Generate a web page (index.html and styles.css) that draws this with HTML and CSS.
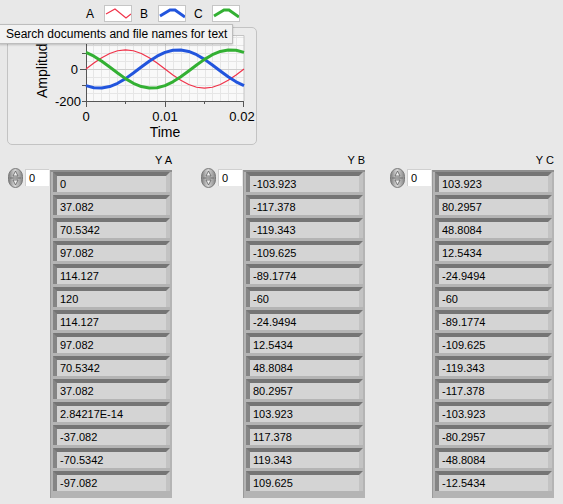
FILE: index.html
```html
<!DOCTYPE html>
<html lang="en">
<head>
    <meta charset="UTF-8">
    <title>Three Phase Arrays</title>
    <link rel="stylesheet" href="styles.css">
</head>
<body>
<div class="panel">
    <div class="legend">
        <span class="legend-label">A</span>
        <span class="legend-swatch">
            <svg width="26" height="15" viewBox="0 0 26 15"><polyline points="1,8 10,3 21,12 26,8" fill="none" stroke="#f0334a" stroke-width="1.2"/></svg>
        </span>
        <span class="legend-label">B</span>
        <span class="legend-swatch">
            <svg width="26" height="15" viewBox="0 0 26 15"><polyline points="1,10 11,4 16,4 26,11" fill="none" stroke="#2255dd" stroke-width="3"/></svg>
        </span>
        <span class="legend-label">C</span>
        <span class="legend-swatch">
            <svg width="26" height="15" viewBox="0 0 26 15"><polyline points="1,10 11,4 16,4 26,11" fill="none" stroke="#33b033" stroke-width="3"/></svg>
        </span>
    </div>

    <div class="graph">
        <svg class="chart" width="248" height="116" viewBox="8 28 248 116">
            <rect x="86" y="35" width="158" height="66" fill="#f9f9f9"/>
            <!-- minor grid -->
            <path d="M93.5 35V101M101.5 35V101M109.5 35V101M117.5 35V101M125.5 35V101M133.5 35V101M141.5 35V101M149.5 35V101M157.5 35V101M173.5 35V101M181.5 35V101M189.5 35V101M197.5 35V101M205.5 35V101M212.5 35V101M220.5 35V101M228.5 35V101M236.5 35V101
                     M86 37.5H244M86 45.5H244M86 53.5H244M86 61.5H244M86 77.5H244M86 85.5H244M86 93.5H244"
                  stroke="#e6e6e6" stroke-width="1"/>
            <!-- major grid -->
            <path d="M165.5 35V101M86 69.5H244" stroke="#cfcfcf" stroke-width="1"/>
            <path d="M86 35.5H244V101" fill="none" stroke="#c4c4c4" stroke-width="1"/>
            <!-- axes -->
            <path d="M86.5 35V101.5H244" fill="none" stroke="#555" stroke-width="1"/>
            <path d="M80 69.5H86M82 101.5H86M82 85.5H86M82 53.5H86M82 37.5H86M86.5 101V107M165.5 101V107M243.5 101V107M125.5 101V104M204.5 101V104"
                  stroke="#555" stroke-width="1"/>

            <polyline fill="none" stroke="#f0334a" stroke-width="1.2" stroke-linejoin="round"
                points="86,69 93.9,63.07 101.8,57.71 109.7,53.47 117.6,50.74 125.5,49.8 133.4,50.74 141.3,53.47 149.2,57.71 157.1,63.07 165,69 172.9,74.93 180.8,80.29 188.7,84.53 196.6,87.26 204.5,88.2 212.4,87.26 220.3,84.53 228.2,80.29 236.1,74.93 244,69"/>
            <polyline fill="none" stroke="#2255dd" stroke-width="3" stroke-linejoin="round"
                points="86,85.63 93.9,87.78 101.8,88.09 109.7,86.54 117.6,83.27 125.5,78.6 133.4,72.99 141.3,66.99 149.2,61.19 157.1,56.15 165,52.37 172.9,50.22 180.8,49.91 188.7,51.46 196.6,54.73 204.5,59.4 212.4,65.01 220.3,71.01 228.2,76.81 236.1,81.85 244,85.63"/>
            <polyline fill="none" stroke="#33b033" stroke-width="3" stroke-linejoin="round"
                points="86,52.37 93.9,56.15 101.8,61.19 109.7,66.99 117.6,72.99 125.5,78.6 133.4,83.27 141.3,86.54 149.2,88.09 157.1,87.78 165,85.63 172.9,81.85 180.8,76.81 188.7,71.01 196.6,65.01 204.5,59.4 212.4,54.73 220.3,51.46 228.2,49.91 236.1,50.22 244,52.37"/>

            <text class="tick" x="78" y="74" text-anchor="end">0</text>
            <text class="tick" x="81" y="106" text-anchor="end">-200</text>
            <text class="tick" x="86" y="121" text-anchor="middle">0</text>
            <text class="tick" x="165" y="121" text-anchor="middle">0.01</text>
            <text class="tick" x="242" y="121" text-anchor="middle">0.02</text>
            <text class="axis-name" x="165" y="137" text-anchor="middle">Time</text>
            <text class="axis-name" transform="translate(47,98) rotate(-90)">Amplitude</text>
        </svg>
    </div>

    <div class="arrays">
        <div class="array-group">
            <div class="array-label">Y A</div>
            <div class="array-body">
                <div class="index">
                    <svg class="spinner" width="15" height="20" viewBox="0 0 15 20">
                        <defs>
                            <linearGradient id="pill" x1="0" x2="1" y1="0" y2="0">
                                <stop offset="0" stop-color="#7c7c7c"/>
                                <stop offset="0.45" stop-color="#d8d8d8"/>
                                <stop offset="1" stop-color="#888"/>
                            </linearGradient>
                        </defs>
                        <rect x="0.5" y="0.5" width="14" height="19" rx="7" ry="8" fill="url(#pill)" stroke="#7a7a7a"/>
                        <path d="M2 10H13" stroke="#6e6e6e"/>
                        <path d="M7.5 3L5 8H10Z M5 12H10L7.5 17Z" fill="#f0f0f0" stroke="#5e5e5e" stroke-width="0.8"/>
                    </svg>
                    <div class="index-box">0</div>
                </div>
                <div class="frame">
                    <div class="cell">0</div>
                    <div class="cell">37.082</div>
                    <div class="cell">70.5342</div>
                    <div class="cell">97.082</div>
                    <div class="cell">114.127</div>
                    <div class="cell">120</div>
                    <div class="cell">114.127</div>
                    <div class="cell">97.082</div>
                    <div class="cell">70.5342</div>
                    <div class="cell">37.082</div>
                    <div class="cell">2.84217E-14</div>
                    <div class="cell">-37.082</div>
                    <div class="cell">-70.5342</div>
                    <div class="cell">-97.082</div>
                </div>
            </div>
        </div>

        <div class="array-group">
            <div class="array-label">Y B</div>
            <div class="array-body">
                <div class="index">
                    <svg class="spinner" width="15" height="20" viewBox="0 0 15 20">
                        <rect x="0.5" y="0.5" width="14" height="19" rx="7" ry="8" fill="url(#pill)" stroke="#7a7a7a"/>
                        <path d="M2 10H13" stroke="#6e6e6e"/>
                        <path d="M7.5 3L5 8H10Z M5 12H10L7.5 17Z" fill="#f0f0f0" stroke="#5e5e5e" stroke-width="0.8"/>
                    </svg>
                    <div class="index-box">0</div>
                </div>
                <div class="frame">
                    <div class="cell">-103.923</div>
                    <div class="cell">-117.378</div>
                    <div class="cell">-119.343</div>
                    <div class="cell">-109.625</div>
                    <div class="cell">-89.1774</div>
                    <div class="cell">-60</div>
                    <div class="cell">-24.9494</div>
                    <div class="cell">12.5434</div>
                    <div class="cell">48.8084</div>
                    <div class="cell">80.2957</div>
                    <div class="cell">103.923</div>
                    <div class="cell">117.378</div>
                    <div class="cell">119.343</div>
                    <div class="cell">109.625</div>
                </div>
            </div>
        </div>

        <div class="array-group">
            <div class="array-label">Y C</div>
            <div class="array-body">
                <div class="index">
                    <svg class="spinner" width="15" height="20" viewBox="0 0 15 20">
                        <rect x="0.5" y="0.5" width="14" height="19" rx="7" ry="8" fill="url(#pill)" stroke="#7a7a7a"/>
                        <path d="M2 10H13" stroke="#6e6e6e"/>
                        <path d="M7.5 3L5 8H10Z M5 12H10L7.5 17Z" fill="#f0f0f0" stroke="#5e5e5e" stroke-width="0.8"/>
                    </svg>
                    <div class="index-box">0</div>
                </div>
                <div class="frame">
                    <div class="cell">103.923</div>
                    <div class="cell">80.2957</div>
                    <div class="cell">48.8084</div>
                    <div class="cell">12.5434</div>
                    <div class="cell">-24.9494</div>
                    <div class="cell">-60</div>
                    <div class="cell">-89.1774</div>
                    <div class="cell">-109.625</div>
                    <div class="cell">-119.343</div>
                    <div class="cell">-117.378</div>
                    <div class="cell">-103.923</div>
                    <div class="cell">-80.2957</div>
                    <div class="cell">-48.8084</div>
                    <div class="cell">-12.5434</div>
                </div>
            </div>
        </div>
    </div>

    <div class="tooltip">Search documents and file names for text</div>
</div>
</body>
</html>
```

FILE: styles.css
```css
body {
    margin: 0;
    background: #e8e8e8;
    font-family: "Liberation Sans", Arial, sans-serif;
    color: #000;
}
.panel {
    position: relative;
    width: 563px;
    height: 504px;
    overflow: hidden;
}

/* legend */
.legend {
    display: flex;
    align-items: center;
    height: 17px;
    padding-top: 5px;
    margin-left: 86px;
}
.legend-label {
    width: 8px;
    margin-right: 10px;
    font-size: 12px;
}
.legend-swatch {
    box-sizing: border-box;
    width: 28px;
    height: 17px;
    margin-right: 8px;
    background: #fff;
    border: 1px solid #c6c6c6;
}
.legend-swatch svg {
    display: block;
}

/* graph */
.graph {
    box-sizing: border-box;
    width: 250px;
    height: 118px;
    margin: 5px 0 0 7px;
    border: 1px solid #c3c3c3;
    border-radius: 5px;
    background: #ebebeb;
}
.chart {
    display: block;
}
.chart .tick {
    font-size: 13px;
    fill: #000;
}
.chart .axis-name {
    font-size: 14px;
    fill: #000;
}

/* arrays */
.arrays {
    display: flex;
    margin-top: 8px;
    padding-left: 8px;
}
.array-group {
    width: 164px;
}
.array-group:nth-child(2) {
    margin-left: 29px;
}
.array-group:nth-child(3) {
    margin-left: 25px;
}
.array-label {
    height: 14px;
    line-height: 14px;
    font-size: 11px;
    text-align: right;
}
.array-body {
    display: flex;
    align-items: flex-start;
}
.index {
    display: flex;
    align-items: flex-start;
    margin-top: 1px;
}
.spinner {
    display: block;
}
.index-box {
    box-sizing: border-box;
    width: 24px;
    height: 17px;
    margin: 1px 0 0 2px;
    padding-left: 3px;
    background: #fff;
    border-top: 1px solid #d0d0d0;
    border-left: 1px solid #d0d0d0;
    font-size: 11px;
    line-height: 16px;
}
.frame {
    box-sizing: border-box;
    width: 122px;
    margin: 3px 0 0 1px;
    padding: 0 2px 4px 2px;
    background: #b4b4b4;
    border-top: 2px solid #8f8f8f;
    border-left: 1px solid #9a9a9a;
}
.cell {
    height: 16px;
    margin-bottom: 3px;
    padding-left: 3px;
    background: #d4d4d4;
    border-top: 4px solid #757575;
    border-left: 4px solid #858585;
    border-right: 4px solid #c3c3c3;
    font-size: 11px;
    line-height: 16px;
}

/* tooltip over the graph */
.tooltip {
    position: absolute;
    left: -1px;
    top: 24px;
    box-sizing: border-box;
    width: 234px;
    height: 20px;
    padding-left: 6px;
    background: #f2f2f2;
    border: 1px solid #bdbdbd;
    box-shadow: 0 1px 2px rgba(0, 0, 0, 0.2);
    font-size: 12px;
    line-height: 18px;
    white-space: nowrap;
}
```
